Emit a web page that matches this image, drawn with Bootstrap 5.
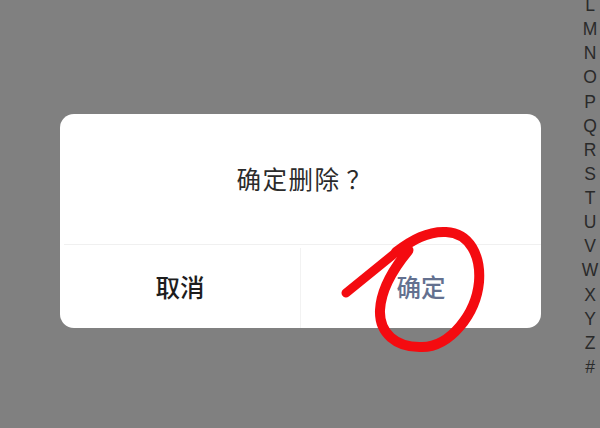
<!DOCTYPE html>
<html lang="zh">
<head>
<meta charset="utf-8">
<title>确定删除</title>
<link href="https://cdn.jsdelivr.net/npm/bootstrap@5.3.0/dist/css/bootstrap.min.css" rel="stylesheet">
<style>
html, body { height: 428px; overflow: hidden; }
body { background: #808080; font-family: "Noto Sans CJK SC", "Liberation Sans", sans-serif; }
.stage { width: 600px; height: 428px; padding: 114px 59px 100px 60px; }
.dlg { height: 214px; width: 481px; border-radius: 14px; background: #fff; overflow: hidden; }
.dlg-title { height: 131px; padding-right: 2px; font-size: 24.5px; letter-spacing: 1.5px; color: #2b2b2b; border-bottom: 1px solid #f0f0f0; margin: 0 0 0 4px; }
.dlg-qmark { margin-left: 6px; margin-right: -6px; }
.dlg-btn { font-size: 24.5px; line-height: 1; border: 0; background: transparent; padding: 0 0 2px; }
.dlg-split { margin-top: 3px; }
.dlg-cancel { width: 241px; color: #1d1d1d; font-weight: 500; border-right: 1px solid #f2f2f2; }
.dlg-ok { color: #63708f; font-weight: 500; }
.rail { position: absolute; top: -7px; right: -1px; width: 22px; font-family: "Liberation Sans", sans-serif; font-size: 17.5px; color: #2a2a2a; }
.rail span { height: 24.14px; line-height: 24.14px; }
.ink { position: absolute; inset: 0; pointer-events: none; }
</style>
</head>
<body>
<div class="stage position-relative">
  <div class="dlg d-flex flex-column">
    <div class="dlg-title d-flex align-items-center justify-content-center"><span class="text-nowrap">确定删除<span class="dlg-qmark">？</span></span></div>
    <div class="dlg-split d-flex flex-grow-1">
      <button type="button" class="dlg-btn dlg-cancel">取消</button>
      <button type="button" class="dlg-btn dlg-ok flex-grow-1">确定</button>
    </div>
  </div>
  <div class="rail d-flex flex-column align-items-center">
    <span>L</span><span>M</span><span>N</span><span>O</span><span>P</span><span>Q</span><span>R</span><span>S</span><span>T</span><span>U</span><span>V</span><span>W</span><span>X</span><span>Y</span><span>Z</span><span>#</span>
  </div>
  <svg class="ink" viewBox="0 0 600 428" width="600" height="428" aria-hidden="true">
    <path d="M346 293 L394 254 C402 248 406 250 409 250" fill="none" stroke="#f40b10" stroke-width="9" stroke-linecap="round" stroke-linejoin="round"/>
    <path d="M396 252 C412 240 428 231 446 232 C470 233 481 256 479 282 C476 314 450 347 422 347 C396 348 379 333 380 310 C381 290 394 268 408 251" fill="none" stroke="#f40b10" stroke-width="10" stroke-linecap="round" stroke-linejoin="round"/>
  </svg>
</div>
<script src="https://cdn.jsdelivr.net/npm/bootstrap@5.3.0/dist/js/bootstrap.bundle.min.js"></script>
</body>
</html>
